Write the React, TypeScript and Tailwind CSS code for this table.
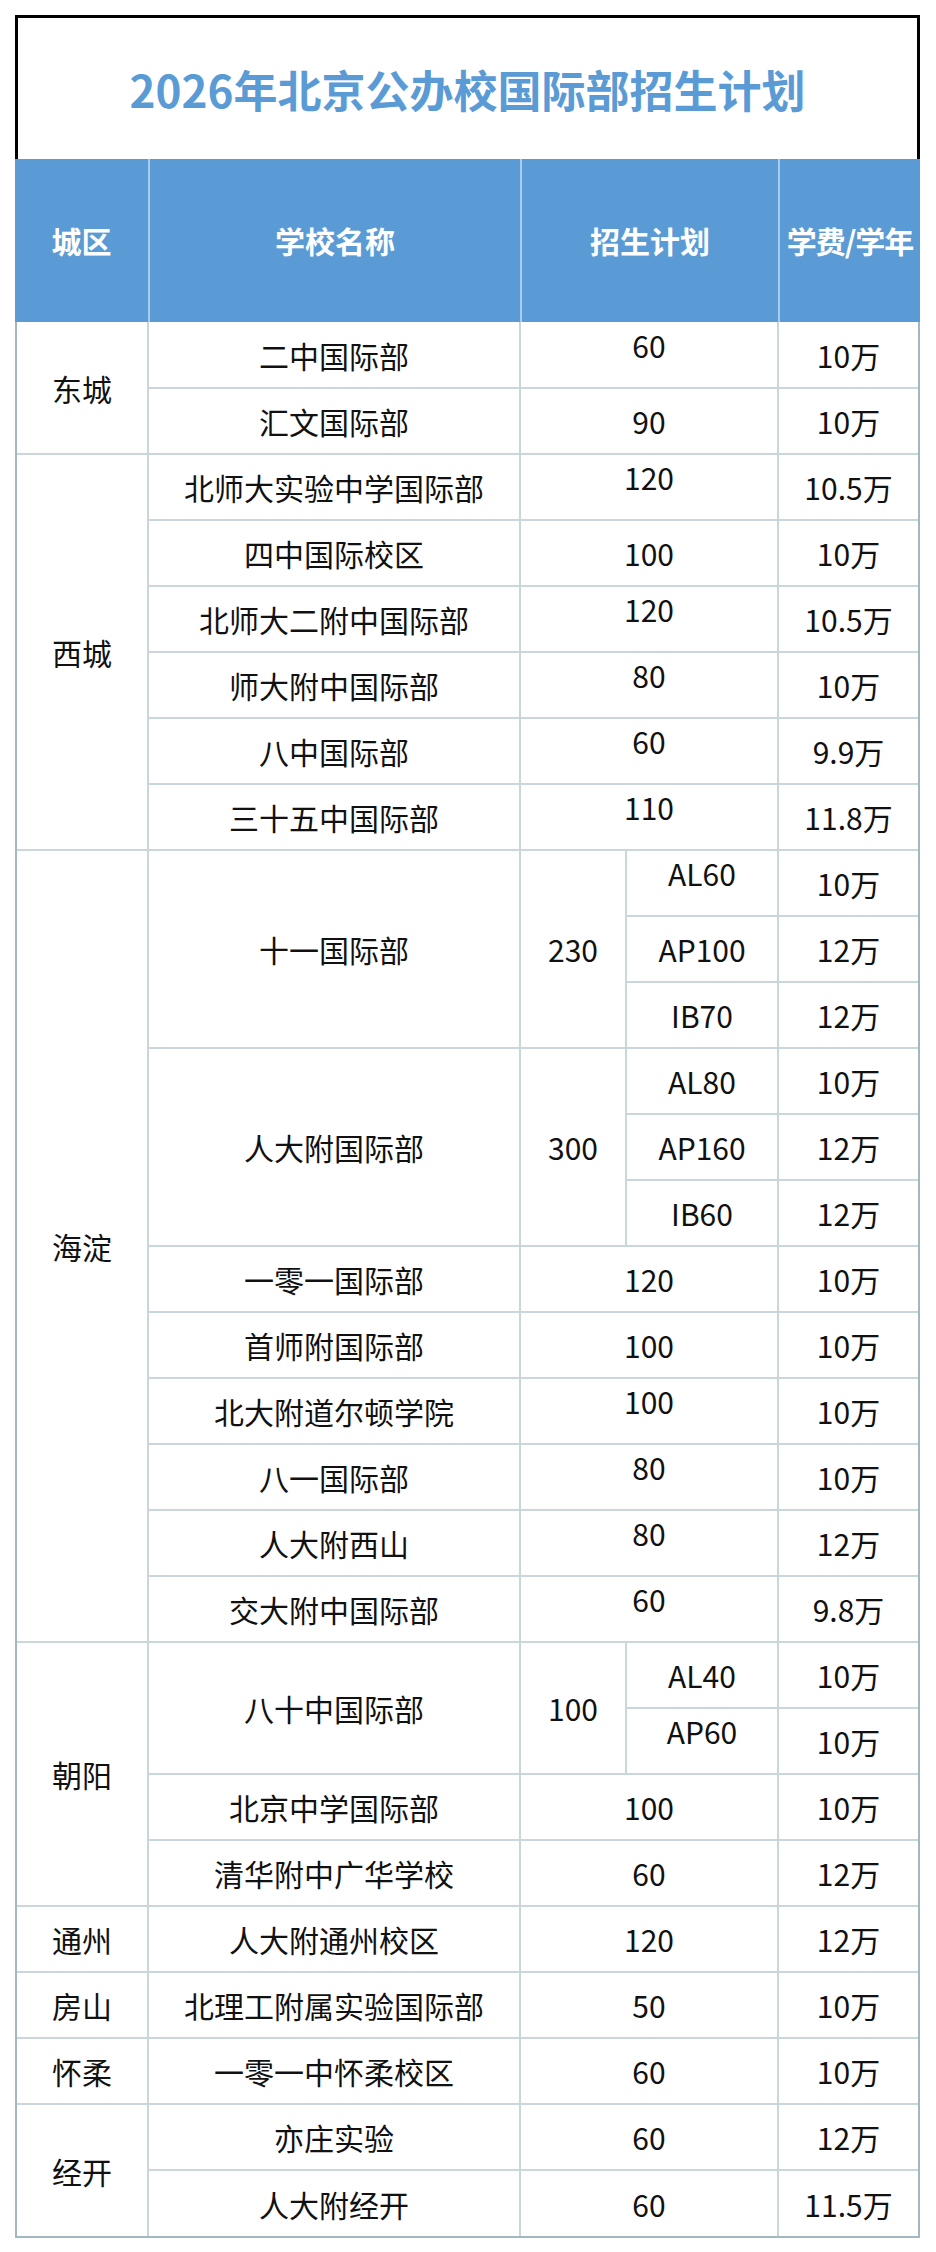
import React from "react";

const td = "border-2 border-[#c9d6dc] text-center align-middle p-0";
const up = " pb-[20px]";

function Fee({ v }: { v: string }) {
  return <td className={td}>{v}</td>;
}

export default function App() {
  return (
    <div
      className="w-[936px] h-[2252px] bg-white pt-[15px] pl-[15px]"
      style={{ fontFamily: '"Noto Sans CJK SC", "Noto Sans", sans-serif' }}
    >
      <div className="w-[905px]">
        <div className="h-[144px] border-t-[3px] border-x-[3px] border-black flex items-center justify-center">
          <span className="text-[44px] font-bold text-[#5b9bd5] leading-none">
            2026年北京公办校国际部招生计划
          </span>
        </div>
        <div className="h-[163px] bg-[#5b9bd5] flex text-white font-bold text-[30px]">
          <div className="w-[133px] flex items-center justify-center">城区</div>
          <div className="w-[372px] border-l-2 border-[#a9ccee] flex items-center justify-center">学校名称</div>
          <div className="w-[258px] border-l-2 border-[#a9ccee] flex items-center justify-center">招生计划</div>
          <div className="w-[142px] border-l-2 border-[#a9ccee] flex items-center justify-center tracking-[-1px]">学费/学年</div>
        </div>
        <div className="border-x-2 border-b-2 border-[#a3b7be]">
          <table className="w-[901px] table-fixed border-collapse border-hidden text-[30px] text-[#111] leading-none">
            <colgroup>
              <col className="w-[131px]" />
              <col className="w-[372px]" />
              <col className="w-[106px]" />
              <col className="w-[152px]" />
              <col className="w-[140px]" />
            </colgroup>
            <tbody>
              <tr className="h-[66px]">
                <td className={td} rowSpan={2}>东城</td>
                <td className={td}>二中国际部</td>
                <td className={td + up} colSpan={2}>60</td>
                <Fee v="10万" />
              </tr>
              <tr className="h-[66px]">
                <td className={td}>汇文国际部</td>
                <td className={td} colSpan={2}>90</td>
                <Fee v="10万" />
              </tr>
              <tr className="h-[66px]">
                <td className={td} rowSpan={6}>西城</td>
                <td className={td}>北师大实验中学国际部</td>
                <td className={td + up} colSpan={2}>120</td>
                <Fee v="10.5万" />
              </tr>
              <tr className="h-[66px]">
                <td className={td}>四中国际校区</td>
                <td className={td} colSpan={2}>100</td>
                <Fee v="10万" />
              </tr>
              <tr className="h-[66px]">
                <td className={td}>北师大二附中国际部</td>
                <td className={td + up} colSpan={2}>120</td>
                <Fee v="10.5万" />
              </tr>
              <tr className="h-[66px]">
                <td className={td}>师大附中国际部</td>
                <td className={td + up} colSpan={2}>80</td>
                <Fee v="10万" />
              </tr>
              <tr className="h-[66px]">
                <td className={td}>八中国际部</td>
                <td className={td + up} colSpan={2}>60</td>
                <Fee v="9.9万" />
              </tr>
              <tr className="h-[66px]">
                <td className={td}>三十五中国际部</td>
                <td className={td + up} colSpan={2}>110</td>
                <Fee v="11.8万" />
              </tr>
              <tr className="h-[66px]">
                <td className={td} rowSpan={12}>海淀</td>
                <td className={td} rowSpan={3}>十一国际部</td>
                <td className={td} rowSpan={3}>230</td>
                <td className={td + up}>AL60</td>
                <Fee v="10万" />
              </tr>
              <tr className="h-[66px]">
                <td className={td}>AP100</td>
                <Fee v="12万" />
              </tr>
              <tr className="h-[66px]">
                <td className={td}>IB70</td>
                <Fee v="12万" />
              </tr>
              <tr className="h-[66px]">
                <td className={td} rowSpan={3}>人大附国际部</td>
                <td className={td} rowSpan={3}>300</td>
                <td className={td}>AL80</td>
                <Fee v="10万" />
              </tr>
              <tr className="h-[66px]">
                <td className={td}>AP160</td>
                <Fee v="12万" />
              </tr>
              <tr className="h-[66px]">
                <td className={td}>IB60</td>
                <Fee v="12万" />
              </tr>
              <tr className="h-[66px]">
                <td className={td}>一零一国际部</td>
                <td className={td} colSpan={2}>120</td>
                <Fee v="10万" />
              </tr>
              <tr className="h-[66px]">
                <td className={td}>首师附国际部</td>
                <td className={td} colSpan={2}>100</td>
                <Fee v="10万" />
              </tr>
              <tr className="h-[66px]">
                <td className={td}>北大附道尔顿学院</td>
                <td className={td + up} colSpan={2}>100</td>
                <Fee v="10万" />
              </tr>
              <tr className="h-[66px]">
                <td className={td}>八一国际部</td>
                <td className={td + up} colSpan={2}>80</td>
                <Fee v="10万" />
              </tr>
              <tr className="h-[66px]">
                <td className={td}>人大附西山</td>
                <td className={td + up} colSpan={2}>80</td>
                <Fee v="12万" />
              </tr>
              <tr className="h-[66px]">
                <td className={td}>交大附中国际部</td>
                <td className={td + up} colSpan={2}>60</td>
                <Fee v="9.8万" />
              </tr>
              <tr className="h-[66px]">
                <td className={td} rowSpan={4}>朝阳</td>
                <td className={td} rowSpan={2}>八十中国际部</td>
                <td className={td} rowSpan={2}>100</td>
                <td className={td}>AL40</td>
                <Fee v="10万" />
              </tr>
              <tr className="h-[66px]">
                <td className={td + up}>AP60</td>
                <Fee v="10万" />
              </tr>
              <tr className="h-[66px]">
                <td className={td}>北京中学国际部</td>
                <td className={td} colSpan={2}>100</td>
                <Fee v="10万" />
              </tr>
              <tr className="h-[66px]">
                <td className={td}>清华附中广华学校</td>
                <td className={td} colSpan={2}>60</td>
                <Fee v="12万" />
              </tr>
              <tr className="h-[66px]">
                <td className={td}>通州</td>
                <td className={td}>人大附通州校区</td>
                <td className={td} colSpan={2}>120</td>
                <Fee v="12万" />
              </tr>
              <tr className="h-[66px]">
                <td className={td}>房山</td>
                <td className={td}>北理工附属实验国际部</td>
                <td className={td} colSpan={2}>50</td>
                <Fee v="10万" />
              </tr>
              <tr className="h-[66px]">
                <td className={td}>怀柔</td>
                <td className={td}>一零一中怀柔校区</td>
                <td className={td} colSpan={2}>60</td>
                <Fee v="10万" />
              </tr>
              <tr className="h-[66px]">
                <td className={td} rowSpan={2}>经开</td>
                <td className={td}>亦庄实验</td>
                <td className={td} colSpan={2}>60</td>
                <Fee v="12万" />
              </tr>
              <tr className="h-[66px]">
                <td className={td}>人大附经开</td>
                <td className={td} colSpan={2}>60</td>
                <Fee v="11.5万" />
              </tr>
            </tbody>
          </table>
        </div>
      </div>
    </div>
  );
}
